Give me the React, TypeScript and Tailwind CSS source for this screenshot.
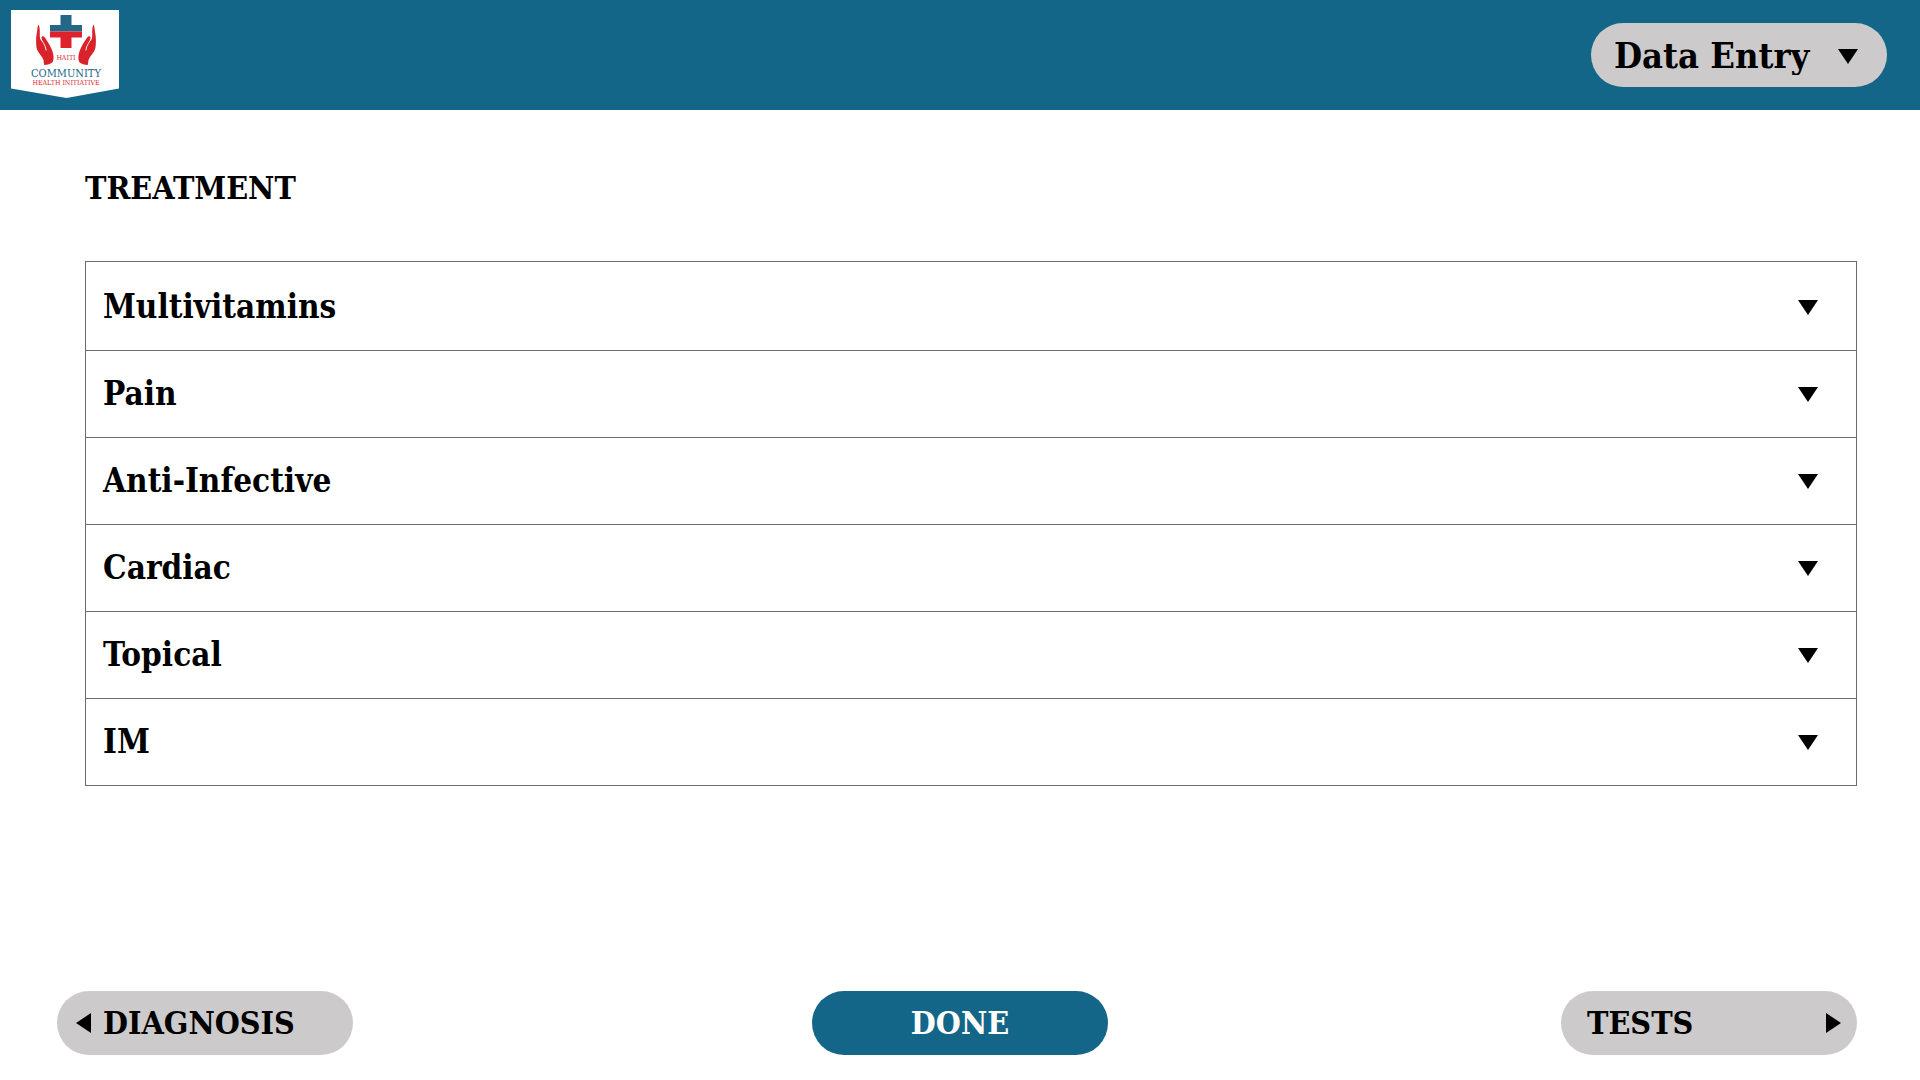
import { useState } from "react";

const categories = ["Multivitamins", "Pain", "Anti-Infective", "Cardiac", "Topical", "IM"];

function DownTriangle({ className = "" }: { className?: string }) {
  return (
    <svg aria-hidden="true" viewBox="0 0 20 15" className={`h-[15px] w-5 shrink-0 ${className}`}>
      <path d="M0 0H20L10 15Z" fill="black" />
    </svg>
  );
}

function SideTriangle({ direction }: { direction: "left" | "right" }) {
  return (
    <svg aria-hidden="true" viewBox="0 0 15 20" className="h-5 w-[15px] shrink-0">
      <path d={direction === "left" ? "M15 0V20L0 10Z" : "M0 0V20L15 10Z"} fill="black" />
    </svg>
  );
}

function Hand() {
  return (
    <>
      <path
        d="M38.6 24.4C37.6 26 37.4 28 37.2 30.5C36.6 34 36 37.500 36.100 41C36.200 44 36.200 47 37 49.500C38 52.500 42 56 43.500 60C43.800 62 43.800 63.500 44.300 65.100C47.500 64.700 51 64 52.600 62.300C54.300 59 53.600 54.500 52.200 50.500C50.600 46 47.500 41.500 44.700 37.200C43.300 35.600 41.300 36 41.400 38C41.500 39.500 42 40.600 42.500 41.800C41 40.500 39.900 38.500 39.800 36.500C39.700 33 40.300 28 38.600 24.400Z"
        fill="#d8232a"
      />
      <path d="M40.500 37.500C42 42 45.500 44.500 46.200 50.500" fill="none" stroke="white" strokeWidth="0.900" />
    </>
  );
}

function Logo() {
  return (
    <svg
      role="img"
      aria-label="Haiti Community Health Initiative"
      viewBox="11 10 108 88"
      className="mb-[2px] h-[88px] w-[108px]"
    >
      <path d="M11 10H119V88.500L66.500 98L11 88.500Z" fill="white" />
      <path d="M60.500 15H71.500V25H82V31.500H50V25H60.500Z" fill="#246788" />
      <path d="M50 31.500H82V37.500H71.500V48H60.500V37.500H50Z" fill="#df2229" />
      <Hand />
      <g transform="translate(132 0) scale(-1 1)">
        <Hand />
      </g>
      <g
        fontFamily="'DejaVu Serif Condensed', 'DejaVu Serif', serif"
        fontWeight="400"
        textAnchor="middle"
      >
        <text x="66" y="60" fontSize="7" fill="#d8232a">HAITI</text>
        <text x="66" y="76.500" fontSize="11" fill="#246788">COMMUNITY</text>
        <text x="66" y="84.500" fontSize="7" fill="#d8232a">HEALTH INITIATIVE</text>
      </g>
    </svg>
  );
}

export default function App() {
  const [open, setOpen] = useState<string | null>(null);

  return (
    <div className="flex min-h-screen flex-col bg-white font-['DejaVu_Serif_Condensed','DejaVu_Serif',serif] text-[32px] leading-10 font-bold text-black">
      <header className="flex h-[110px] items-center justify-between bg-[#136688] pr-[33px] pl-[11px]">
        <Logo />
        <div className="relative">
          <select
            aria-label="Section"
            className="h-16 w-[296px] appearance-none rounded-full bg-[#cdcacb] pl-[23px] text-[36px] leading-10"
          >
            <option>Data Entry</option>
          </select>
          <DownTriangle className="pointer-events-none absolute top-[26px] right-[29px]" />
        </div>
      </header>

      <main className="flex-1 pt-[58px] pr-[63px] pl-[85px]">
        <h1>TREATMENT</h1>
        <ul className="mt-[53px] border border-[#6b6b6b] pt-[2px] text-[33px]">
          {categories.map((name) => (
            <li key={name} className="border-b border-[#6b6b6b] last:border-b-0">
              <button
                type="button"
                aria-expanded={open === name}
                onClick={() => setOpen(open === name ? null : name)}
                className="flex h-[86px] w-full items-center justify-between pr-[38px] pl-[17px]"
              >
                <span>{name}</span>
                <DownTriangle />
              </button>
            </li>
          ))}
        </ul>
      </main>

      <footer className="grid grid-cols-[1fr_auto_1fr] px-[57px] pb-[25px]">
        <button type="button" className="flex h-16 w-[296px] items-center gap-3 rounded-full bg-[#cdcacb] pl-[19px]">
          <SideTriangle direction="left" />
          DIAGNOSIS
        </button>
        <button type="button" className="h-16 w-[296px] rounded-full bg-[#136688] text-white">
          DONE
        </button>
        <button
          type="button"
          className="mr-[6px] flex h-16 w-[296px] items-center justify-between justify-self-end rounded-full bg-[#cdcacb] pr-4 pl-[26px]"
        >
          TESTS
          <SideTriangle direction="right" />
        </button>
      </footer>
    </div>
  );
}
